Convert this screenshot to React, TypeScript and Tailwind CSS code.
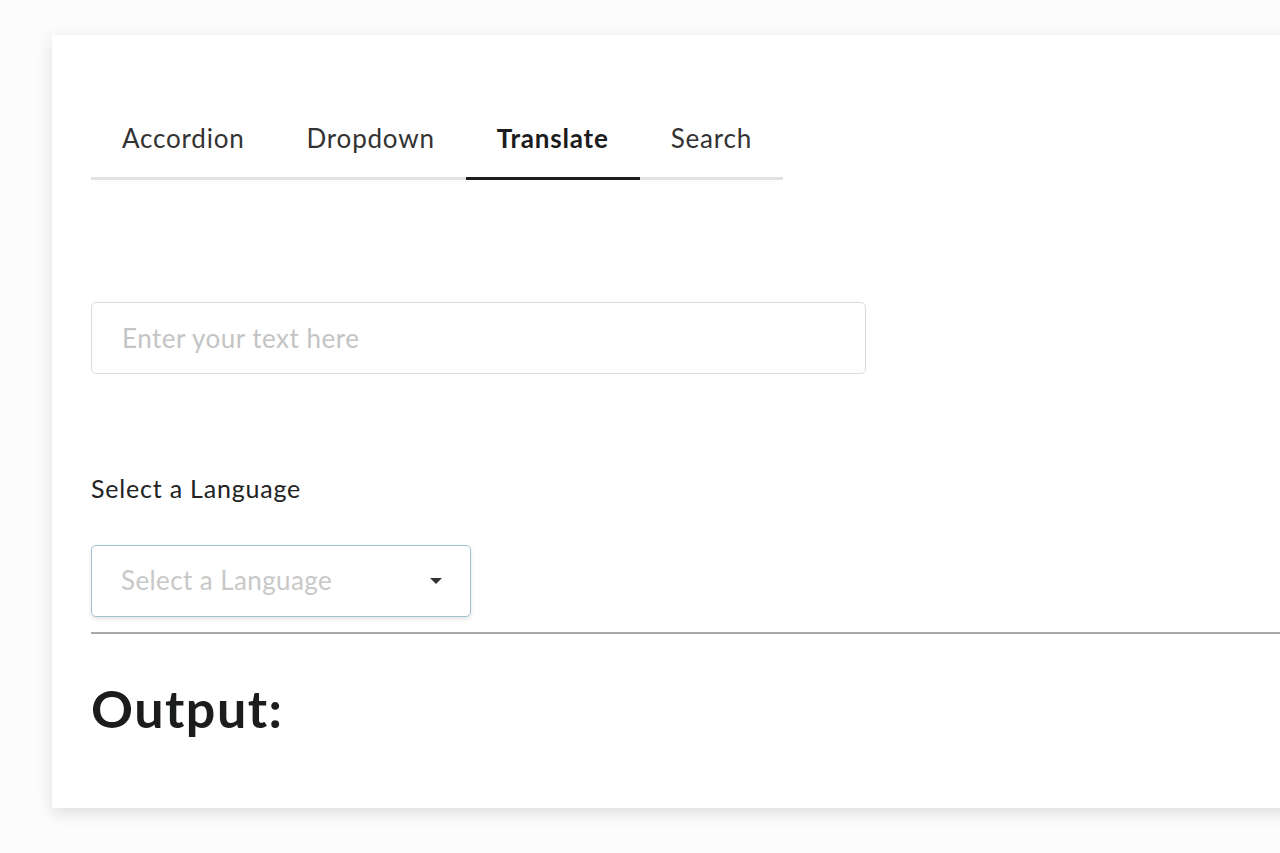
import { useState } from 'react'

const tabs = ['Accordion', 'Dropdown', 'Translate', 'Search']

export default function App() {
  const [active, setActive] = useState('Translate')
  const [text, setText] = useState('')

  return (
    <div
      className="min-h-screen overflow-hidden bg-[#fcfcfc] pl-[52px] pt-[35px]"
      style={{ fontFamily: 'Lato, "Noto Sans", sans-serif' }}
    >
      <div className="h-[773px] w-[1260px] bg-white pl-[39px] pt-[64px] shadow-[0_5px_16px_rgba(0,0,0,0.12)]">
        <div className="inline-flex border-b-[3px] border-[#e2e2e2]">
          {tabs.map((t) => (
            <button
              key={t}
              onClick={() => setActive(t)}
              className={
                t === active
                  ? '-mb-[3px] border-b-[3px] border-[#1b1c1d] px-[31px] pb-[19px] pt-[20px] text-[26px] font-bold tracking-[0.8px] text-[#1b1c1d]'
                  : 'px-[31px] pb-[19px] pt-[20px] text-[26px] tracking-[0.8px] text-[#333]'
              }
            >
              {t}
            </button>
          ))}
        </div>

        <div className="mt-[122px] w-[775px]">
          <input
            value={text}
            onChange={(e) => setText(e.target.value)}
            placeholder="Enter your text here"
            className="h-[72px] w-full rounded-[5px] border border-[#dcdcdc] px-[30px] text-[26px] tracking-[0.5px] text-[#333] outline-none placeholder:text-[#c4c4c4]"
          />
        </div>

        <div className="mt-[96px] text-[25px] tracking-[0.8px] text-[#222]">Select a Language</div>

        <div className="mt-[37px] flex h-[72px] w-[380px] items-center justify-between rounded-[5px] border border-[#9fc1d4] pl-[29px] pr-[28px] shadow-[0_2px_4px_rgba(34,36,38,0.12)]">
          <span className="text-[26px] tracking-[0.4px] text-[#c8c8c8]">Select a Language</span>
          <svg width="12" height="8" viewBox="0 0 12 8">
            <path d="M0 1h12L6 7z" fill="#333" />
          </svg>
        </div>

        <div className="mt-[15px] h-[2px] bg-[#a8a8a8]" />

        <h1 className="mt-[48px] text-[52px] font-bold leading-none tracking-[1.5px] text-[#1b1c1d]">
          Output:
        </h1>
      </div>
    </div>
  )
}
